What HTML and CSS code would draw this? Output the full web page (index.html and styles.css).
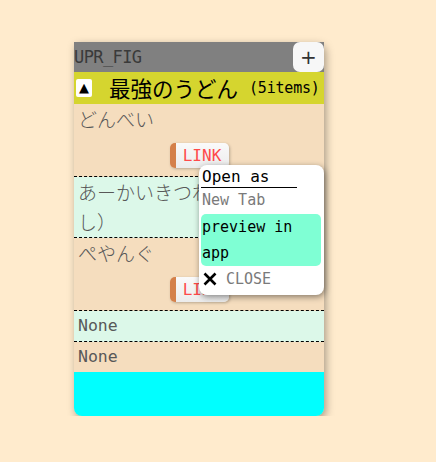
FILE: index.html
```html
<!DOCTYPE html>
<html lang="ja">
<head>
<meta charset="utf-8">
<link rel="stylesheet" href="styles.css">
</head>
<body>
<div class="card">
  <div class="header">
    <span class="header-title">UPR_FIG</span>
    <button class="add-btn">+</button>
  </div>
  <div class="title-bar">
    <span class="toggle">▲</span>
    <span class="title">最強のうどん</span>
    <span class="count">(5items)</span>
  </div>
  <div class="row wheat">
    <div class="name">どんべい</div>
    <div class="link-wrap"><button class="link-btn">LINK</button></div>
  </div>
  <div class="row mint">
    <div class="name">あーかいきつね（おあげ増し）</div>
  </div>
  <div class="row wheat">
    <div class="name">ぺやんぐ</div>
    <div class="link-wrap"><button class="link-btn">LINK</button></div>
  </div>
  <div class="row mint">
    <div class="name latin">None</div>
  </div>
  <div class="row wheat last">
    <div class="name latin">None</div>
  </div>
  <div class="footer"></div>

  <div class="popup">
    <div class="popup-title">Open as</div>
    <div class="popup-item">New Tab</div>
    <div class="popup-item active">preview in app</div>
    <div class="popup-close">
      <svg class="x" width="14" height="14" viewBox="0 0 14 14"><path d="M1.5 1.5 L12.5 12.5 M12.5 1.5 L1.5 12.5" stroke="#000" stroke-width="2.6" fill="none"/></svg>
      <span>CLOSE</span>
    </div>
  </div>
</div>
</body>
</html>
```
FILE: styles.css
```css
* { box-sizing: border-box; }
html, body { margin: 0; padding: 0; }
body {
  background: #ffebcd;
  padding: 42px 0 0 74px;
  font-family: "DejaVu Sans Mono", "Noto Sans CJK JP", monospace;
  color: #555;
}
.card {
  position: relative;
  width: 250px;
  border-radius: 0 8px 8px 8px;
  box-shadow: 2px 3px 8px rgba(0,0,0,0.35);
  background: #f5deb3;
}
.header {
  height: 30px;
  background: #808080;
  display: flex;
  align-items: center;
  justify-content: space-between;
}
.header-title {
  font-family: "DejaVu Sans Mono", monospace;
  font-size: 17px;
  color: #3a3a3a;
  letter-spacing: -0.6px;
}
.add-btn {
  width: 31px;
  height: 30px;
  border: none;
  border-radius: 7px;
  background: #f7f7f7;
  font-family: "DejaVu Sans", sans-serif;
  font-size: 20px;
  color: #333;
  padding: 0;
  line-height: 30px;
}
.title-bar {
  height: 32px;
  background: #d5d52f;
  display: flex;
  align-items: center;
  padding-left: 2px;
  color: #000;
}
.toggle {
  width: 16px;
  height: 18px;
  background: #fff;
  border-radius: 2px;
  font-size: 13px;
  line-height: 18px;
  text-align: center;
  font-family: "DejaVu Sans", sans-serif;
  margin-right: 17px;
}
.title {
  font-family: "Noto Sans CJK JP", sans-serif;
  font-size: 21.5px;
  line-height: 32px;
}
.count {
  font-size: 15px;
  margin-left: 11px;
  letter-spacing: -0.2px;
  font-family: "DejaVu Sans Mono", "Noto Sans CJK JP", monospace;
}
.row {
  border-bottom: 1px dashed #000;
  padding-left: 4px;
}
.row.last { border-bottom: none; }
.wheat { background: #f5ddbe; }
.mint { background: #dcf8e9; }
.name {
  font-family: "Noto Sans CJK JP", sans-serif;
  font-size: 19px;
  line-height: 30px;
  font-weight: 300;
  color: #585858;
}
.name.latin {
  font-family: "DejaVu Sans Mono", monospace;
  font-size: 16.5px;
}
.link-wrap {
  display: flex;
  justify-content: center;
  padding: 9px 0 8px;
  margin-left: -4px;
}
.link-btn {
  width: 59px;
  height: 25px;
  border: none;
  border-left: 6px solid #d4804a;
  border-radius: 5px;
  background: linear-gradient(#fafafa, #ececec);
  box-shadow: 1px 1px 3px rgba(0,0,0,0.25);
  color: #ff4a4a;
  font-family: "DejaVu Sans Mono", monospace;
  font-size: 16px;
  padding: 0;
  line-height: 25px;
}
.footer {
  height: 44px;
  background: #00ffff;
  border-radius: 0 0 8px 8px;
}
.popup {
  position: absolute;
  left: 125px;
  top: 123px;
  width: 125px;
  height: 130px;
  background: #fff;
  border-radius: 8px;
  box-shadow: 1px 2px 6px rgba(0,0,0,0.45);
  padding: 2px 3px 0 2px;
}
.popup-title {
  font-family: "DejaVu Sans Mono", monospace;
  font-size: 16px;
  color: #000;
  width: 96px;
  border-bottom: 1.5px solid #000;
  line-height: 20px;
  padding-left: 1px;
  font-weight: 500;
}
.popup-item {
  font-family: "DejaVu Sans Mono", monospace;
  font-size: 15px;
  line-height: 24px;
  color: #7a7a7a;
  padding-left: 1px;
}
.popup-item.active {
  margin-top: 2px;
  background: #7fffd4;
  border-radius: 5px;
  color: #000;
  line-height: 26px;
  padding-right: 20px;
}
.popup-close {
  display: flex;
  align-items: center;
  gap: 9px;
  height: 26px;
  font-family: "DejaVu Sans Mono", monospace;
  font-size: 15px;
  color: #7a7a7a;
  padding-left: 2px;
}
.popup-close .x { flex: none; }
```
